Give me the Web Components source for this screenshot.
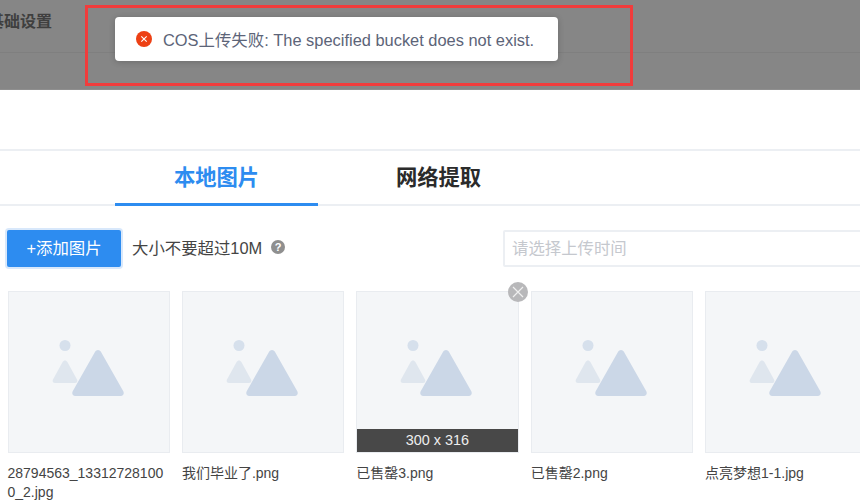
<!DOCTYPE html>
<html lang="zh">
<head>
<meta charset="utf-8">
<title>图片上传</title>
<style>
  html, body { margin: 0; height: 100%; background: #fff; }
  body {
    width: 860px;
    height: 500px;
    overflow: hidden;
    position: relative;
    font-family: "Liberation Sans", "Noto Sans CJK SC", sans-serif;
  }
</style>
</head>
<body>
  <dim-header title-text="基础设置"></dim-header>
  <upload-toast>COS上传失败: The specified bucket does not exist.</upload-toast>
  <tab-bar></tab-bar>
  <upload-toolbar></upload-toolbar>
  <image-grid>
    <image-card name="28794563_133127281000_2.jpg"></image-card>
    <image-card name="我们毕业了.png"></image-card>
    <image-card name="已售罄3.png" size="300 x 316" removable></image-card>
    <image-card name="已售罄2.png"></image-card>
    <image-card name="点亮梦想1-1.jpg"></image-card>
  </image-grid>

<script>
class DimHeader extends HTMLElement {
  constructor() {
    super();
    this.attachShadow({ mode: 'open' });
  }

  connectedCallback() {
    this.shadowRoot.innerHTML = `
      <style>
        :host {
          display: block;
          height: 89px;
          background: #868686;
          border-bottom: 1px solid #8f8f8f;
          overflow: hidden;
        }
        .row {
          height: 53px;
          border-bottom: 1px solid #7f7f7f;
          padding: 12px 0 0;
          box-sizing: border-box;
          margin-left: -12px;
        }
        .title {
          font-size: 16px;
          line-height: 19px;
          font-weight: 700;
          color: #3f3f3f;
        }
      </style>
      <div class="row"><span class="title">${this.getAttribute('title-text')}</span></div>
    `;
  }
}

class UploadToast extends HTMLElement {
  constructor() {
    super();
    this.attachShadow({ mode: 'open' });
  }

  connectedCallback() {
    this.shadowRoot.innerHTML = `
      <style>
        :host {
          position: absolute;
          left: 85px;
          top: 5px;
          width: 548px;
          height: 81px;
          box-sizing: border-box;
          border: 3px solid #f13c3c;
          display: block;
        }
        .toast {
          position: absolute;
          left: 27px;
          top: 9px;
          width: 443px;
          height: 44px;
          box-sizing: border-box;
          background: #fff;
          border-radius: 4px;
          box-shadow: 0 1px 6px rgba(0, 0, 0, .2);
          display: flex;
          align-items: center;
          padding-left: 21px;
          gap: 11px;
          font-size: 16.42px;
          color: #5c6478;
          white-space: nowrap;
        }
        svg { flex: none; }
      </style>
      <div class="toast">
        <svg width="16" height="16" viewBox="0 0 16 16">
          <circle cx="8" cy="8" r="8" fill="#ed4014"/>
          <path d="M5.3 5.3l5.4 5.4M10.7 5.3l-5.4 5.4" stroke="#fff" stroke-width="1.1" fill="none"/>
        </svg>
        <span><slot></slot></span>
      </div>
    `;
  }
}

class TabBar extends HTMLElement {
  constructor() {
    super();
    this.attachShadow({ mode: 'open' });
  }

  connectedCallback() {
    this.shadowRoot.innerHTML = `
      <style>
        :host {
          display: flex;
          margin-top: 59px;
          height: 57px;
          box-sizing: border-box;
          border-top: 2px solid #eceff3;
          border-bottom: 2px solid #eceff3;
          padding-left: 115px;
          gap: 19px;
        }
        .tab {
          width: 203px;
          height: 55px;
          box-sizing: border-box;
          text-align: center;
          font-size: 21.3px;
          font-weight: 700;
          line-height: 55px;
          color: #2b2b2b;
        }
        .tab.active {
          color: #2d8cf0;
          border-bottom: 3px solid #2d8cf0;
        }
      </style>
      <div class="tab active">本地图片</div>
      <div class="tab">网络提取</div>
    `;
  }
}

class UploadToolbar extends HTMLElement {
  constructor() {
    super();
    this.attachShadow({ mode: 'open' });
  }

  connectedCallback() {
    this.shadowRoot.innerHTML = `
      <style>
        :host {
          display: flex;
          align-items: center;
          margin-top: 23px;
          padding-left: 7px;
          height: 38px;
          font-size: 16.4px;
          color: #444;
        }
        .add {
          width: 114px;
          height: 37px;
          box-sizing: border-box;
          padding-bottom: 2px;
          background: #2d8cf0;
          color: #fff;
          border-radius: 2px;
          box-shadow: 0 0 0 2px #d8e8fb;
          display: flex;
          align-items: center;
          justify-content: center;
        }
        .hint { margin: 0 0 3px 11px; }
        .help {
          margin: 0 0 2px 9px;
          width: 14px;
          height: 14px;
          border-radius: 50%;
          background: #8f8f8f;
          color: #fff;
          font-size: 11px;
          font-weight: 700;
          line-height: 14px;
          text-align: center;
        }
        .time {
          margin-left: auto;
          margin-right: -20px;
          width: 377px;
          height: 37px;
          box-sizing: border-box;
          border: 2px solid #eceff3;
          border-radius: 2px;
          padding-left: 7px;
          line-height: 33px;
          color: #c5c8ce;
        }
      </style>
      <div class="add">+添加图片</div>
      <span class="hint">大小不要超过10M</span>
      <span class="help">?</span>
      <div class="time">请选择上传时间</div>
    `;
  }
}

class ImageGrid extends HTMLElement {
  constructor() {
    super();
    this.attachShadow({ mode: 'open' });
  }

  connectedCallback() {
    this.shadowRoot.innerHTML = `
      <style>
        :host {
          display: flex;
          gap: 12px;
          margin-top: 24px;
          padding-left: 7.5px;
          width: 900px;
        }
      </style>
      <slot></slot>
    `;
  }
}

class ImageCard extends HTMLElement {
  constructor() {
    super();
    this.attachShadow({ mode: 'open' });
  }

  connectedCallback() {
    const size = this.getAttribute('size');
    const remove = this.hasAttribute('removable');
    this.shadowRoot.innerHTML = `
      <style>
        :host {
          display: block;
          flex: none;
          width: 162.4px;
          font-size: 14px;
          line-height: 19px;
          color: #444;
        }
        .thumb {
          position: relative;
          height: 162px;
          box-sizing: border-box;
          background: #f4f6f8;
          border: 1px solid #e9ecf0;
          display: flex;
          align-items: center;
          justify-content: center;
        }
        .thumb > svg { margin: 0 2px 6px 0; }
        .size {
          position: absolute;
          left: 0;
          right: 0;
          bottom: 0;
          height: 23.5px;
          background: #484848;
          color: #eee;
          text-align: center;
          line-height: 23.5px;
          font-size: 14.4px;
        }
        .close {
          position: absolute;
          right: -10px;
          top: -10px;
          width: 20px;
          height: 20px;
          border-radius: 50%;
          background: #b8b8ba;
        }
        .name {
          margin-top: 11px;
          word-break: break-all;
        }
      </style>
      <div class="thumb">
        <svg width="72" height="58" viewBox="0 0 72 58">
          <circle cx="13" cy="5.5" r="5.5" fill="#d6e0ec"/>
          <path d="M13 20.5c1 0 1.8.6 2.4 1.6l9.6 17.4c1 1.9-.1 3.5-2 3.5H3c-1.9 0-3-1.6-2-3.5l9.6-17.4c.6-1 1.4-1.6 2.4-1.6z" fill="#dfe6ee"/>
          <path d="M46 10c1.2 0 2.2.7 2.9 1.8l22.4 39.4c1.1 2.1.1 4.8-2.5 4.8H23.2c-2.6 0-3.6-2.7-2.5-4.8l22.4-39.4c.7-1.1 1.7-1.8 2.9-1.8z" fill="#cbd7e7"/>
        </svg>
        ${size ? `<div class="size">${size}</div>` : ''}
        ${remove ? `<div class="close"><svg width="20" height="20" viewBox="0 0 20 20"><path d="M5 5l10 10M15 5L5 15" stroke="#f0f0f0" stroke-width="1.2"/></svg></div>` : ''}
      </div>
      <div class="name">${this.getAttribute('name')}</div>
    `;
  }
}

customElements.define('dim-header', DimHeader);
customElements.define('upload-toast', UploadToast);
customElements.define('tab-bar', TabBar);
customElements.define('upload-toolbar', UploadToolbar);
customElements.define('image-grid', ImageGrid);
customElements.define('image-card', ImageCard);
</script>
</body>
</html>
